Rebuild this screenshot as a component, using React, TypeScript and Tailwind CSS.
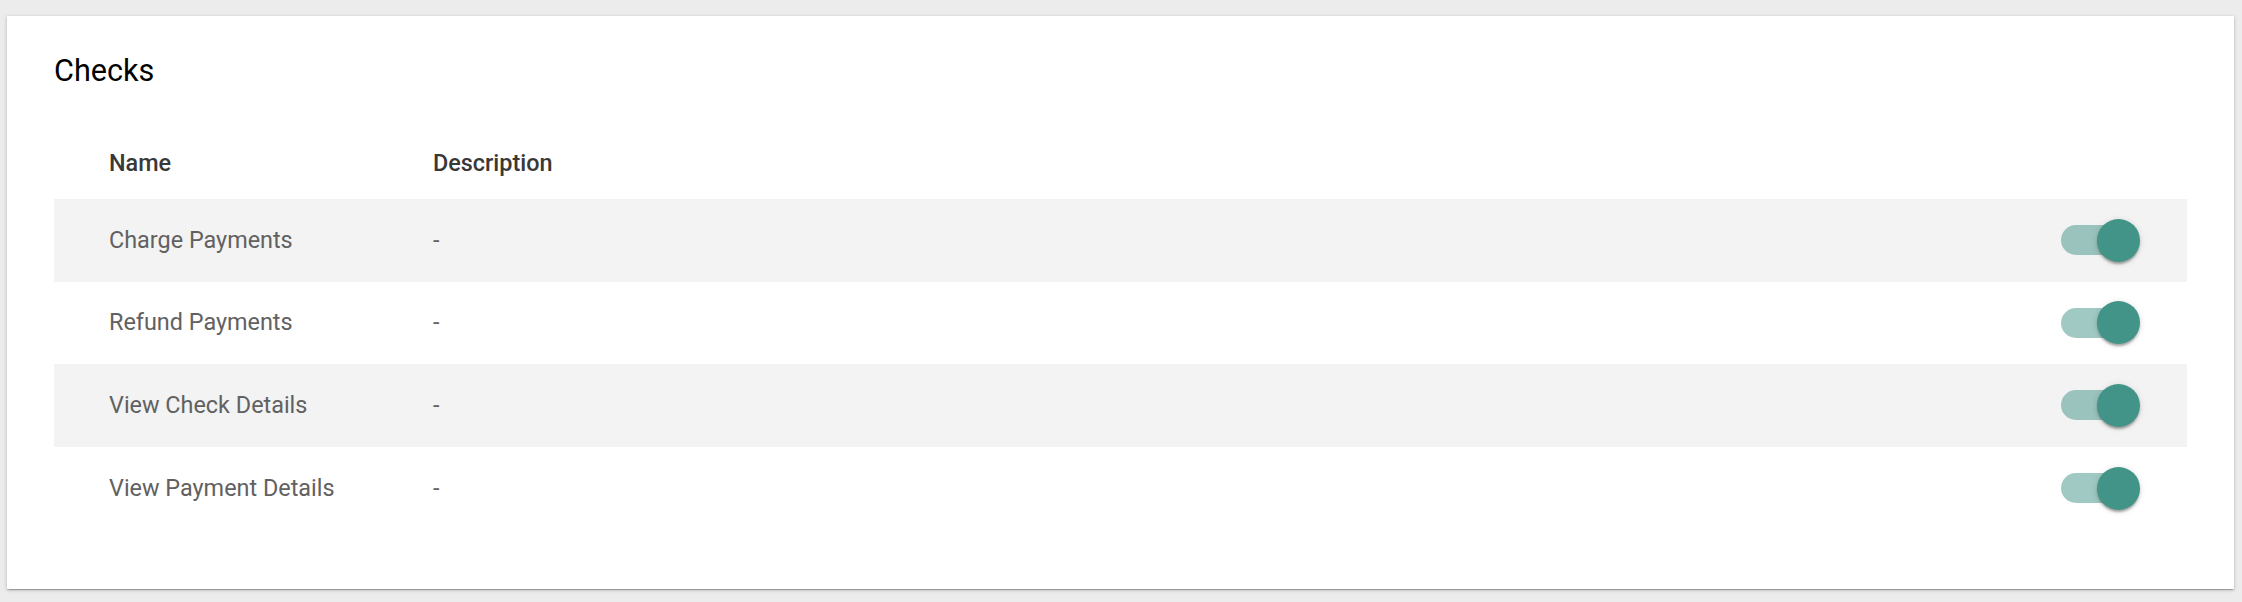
const checks = [
  { name: "Charge Payments", description: "-", enabled: true },
  { name: "Refund Payments", description: "-", enabled: true },
  { name: "View Check Details", description: "-", enabled: true },
  { name: "View Payment Details", description: "-", enabled: true },
];

function Toggle({ on }: { on: boolean }) {
  return (
    <div className="relative h-[43px] w-[79px] flex items-center">
      <div className="h-[30px] w-[73px] rounded-full bg-[#419487] opacity-50" />
      <div
        className={`absolute top-0 h-[43px] w-[43px] rounded-full bg-[#419487] shadow-[0_3px_2px_-1px_rgba(0,0,0,0.2),0_2px_3px_0_rgba(0,0,0,0.14),0_1px_7px_0_rgba(0,0,0,0.12)] ${
          on ? "left-[36px]" : "left-0"
        }`}
      />
    </div>
  );
}

export default function App() {
  return (
    <div
      className="min-h-screen bg-[#ececec] pt-4 pl-[7px] pr-2"
      style={{ fontFamily: "Roboto, 'Noto Sans', sans-serif" }}
    >
      <div className="bg-white px-[47px] pt-[37px] pb-[60px] shadow-[0_1px_4px_rgba(0,0,0,0.2),0_1px_1px_rgba(0,0,0,0.14),0_3px_1px_-2px_rgba(0,0,0,0.12)]">
        <h2 className="text-[30.6px] leading-[36px] text-black font-normal">Checks</h2>

        <div className="mt-[38px]">
          {/* Header */}
          <div className="flex h-[72px] items-center pl-[55px] text-[23.4px] leading-[23px] font-medium text-[#383838]">
            <div className="w-[324px]">Name</div>
            <div>Description</div>
          </div>

          {/* Rows */}
          {checks.map((c, i) => (
            <div
              key={c.name}
              className={`flex h-[82.6px] items-center pl-[55px] pr-[47px] text-[23.4px] leading-[23px] text-[#616161] ${
                i % 2 === 0 ? "bg-[#f3f3f3]" : "bg-white"
              }`}
            >
              <div className="w-[324px]">{c.name}</div>
              <div className="flex-1">{c.description}</div>
              <Toggle on={c.enabled} />
            </div>
          ))}
        </div>
      </div>
    </div>
  );
}
